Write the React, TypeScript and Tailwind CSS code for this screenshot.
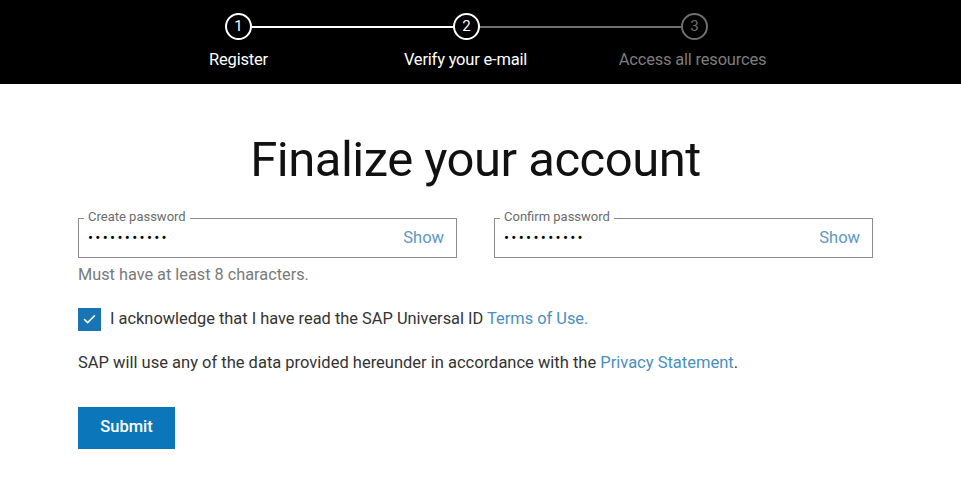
import { Check } from "lucide-react";

const steps = [
  { n: 1, label: "Register", done: true },
  { n: 2, label: "Verify your e-mail", done: true },
  { n: 3, label: "Access all resources", done: false },
];

const PasswordField = ({ label }: { label: string }) => {
  return (
    <div className="relative w-[379px]">
      <span className="absolute left-[6px] -top-[9px] bg-white px-[4px] text-[13px] leading-[16px] text-[#6b6b6b]">
        {label}
      </span>
      <div className="h-[40px] border border-[#8c8c8c] flex items-center justify-between pl-[9px] pr-[12px]">
        <span className="text-[15px] tracking-[2.3px] text-black">•••••••••••</span>
        <span className="text-[16.5px] text-[#5e98c2]">Show</span>
      </div>
    </div>
  );
};

export default function App() {
  return (
    <div className="min-h-[478px] bg-white font-['Roboto',sans-serif]">
      <div className="bg-black h-[84px] pt-[13px]">
        <div className="flex items-center pl-[225px]">
          {steps.map((s, i) => (
            <div key={s.n} className="flex items-center">
              <div
                className={
                  s.done
                    ? "w-[27px] h-[27px] rounded-full border-2 border-white text-white flex items-center justify-center text-[15px]"
                    : "w-[27px] h-[27px] rounded-full border-2 border-[#6f6f6f] text-[#6f6f6f] flex items-center justify-center text-[15px]"
                }
              >
                {s.n}
              </div>
              {i < 2 && (
                <div className={i === 0 ? "w-[201px] h-[2px] bg-white" : "w-[201px] h-[2px] bg-[#6f6f6f]"} />
              )}
            </div>
          ))}
        </div>
        <div className="flex ml-[125px] mt-[8px]">
          {steps.map((s) => (
            <div
              key={s.n}
              className={
                s.done
                  ? "w-[227px] text-center text-[16.5px] text-white tracking-[-0.2px]"
                  : "w-[227px] text-center text-[16.5px] text-[#7d7d7d] tracking-[-0.2px]"
              }
            >
              {s.label}
            </div>
          ))}
        </div>
      </div>

      <div className="w-[795px] ml-[78px]">
        <h1 className="text-center text-[49px] leading-[56px] text-[#111] mt-[48px] tracking-[-0.5px]">
          Finalize your account
        </h1>

        <div className="flex justify-between mt-[30px]">
          <PasswordField label="Create password" />
          <PasswordField label="Confirm password" />
        </div>
        <p className="mt-[5px] text-[16.3px] text-[#7a7a7a]">Must have at least 8 characters.</p>

        <label className="flex items-center gap-[9px] mt-[20px]">
          <span className="w-[23px] h-[23px] bg-[#1874b3] flex items-center justify-center">
            <Check className="w-[15px] h-[15px] text-white" strokeWidth={2.5} />
          </span>
          <span className="text-[16.4px] text-[#333]">
            I acknowledge that I have read the SAP Universal ID{" "}
            <span className="text-[#4a8fc0]">Terms of Use.</span>
          </span>
        </label>

        <p className="mt-[19px] text-[16.5px] text-[#333]">
          SAP will use any of the data provided hereunder in accordance with the{" "}
          <span className="text-[#4a8fc0]">Privacy Statement</span>.
        </p>

        <button className="mt-[31px] w-[97px] h-[42px] bg-[#0b77ba] text-white text-[16.5px] font-medium">
          Submit
        </button>
      </div>
    </div>
  );
}
